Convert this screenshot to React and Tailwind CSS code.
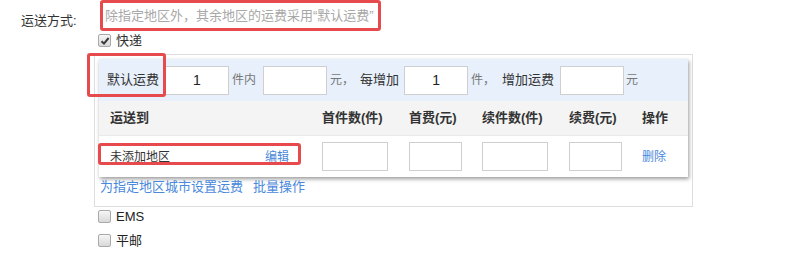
import { Fragment } from 'react';

const FONT = 'font-["Liberation_Sans","Noto_Sans_CJK_SC",sans-serif]';

function Box({ checked }) {
  return (
    <span className="w-[13px] h-[13px] rounded-[2px] border border-[#a9a9a9] bg-gradient-to-b from-[#f6f6f6] to-[#d9d9d9] flex items-center justify-center shrink-0">
      {checked && (
        <svg width="10" height="10" viewBox="0 0 10 10">
          <path d="M1.5 5.2 L4 7.6 L8.6 2" fill="none" stroke="#3a3a3a" strokeWidth="2" />
        </svg>
      )}
    </span>
  );
}

function Field({ value = '', className = '' }) {
  return (
    <div className={`h-[29px] bg-white border border-[#cfcfcf] flex items-center justify-center text-[14px] text-[#222] ${className}`}>
      {value}
    </div>
  );
}

const heads = ['运送到', '首件数(件)', '首费(元)', '续件数(件)', '续费(元)', '操作'];

export default function App() {
  return (
    <div className={`relative w-[791px] h-[265px] bg-white overflow-hidden text-[13px] text-[#333] ${FONT}`}>
      {/* 运送方式 */}
      <div className="flex h-[31px]">
        <div className="w-[100px] pl-[21px] pt-[11px] leading-[20px]">运送方式:</div>
        <div className="w-[281px] h-[31px] border-[3px] border-[#e64a4d] rounded-[3px] pl-[2px] flex items-center text-[13px] text-[#a8a8a8]">
          除指定地区外，其余地区的运费采用“默认运费”
        </div>
      </div>

      <div className="flex items-center gap-[5px] pl-[98px] mt-[3px] h-[13px]">
        <Box checked />
        <span className="leading-[13px]">快递</span>
      </div>

      {/* 快递设置 */}
      <div className="ml-[94px] mt-[7px] w-[599px] h-[153px] border border-[#dedede] pt-[4px] pl-[4px]">
        <div className="w-[589px] h-[118px] bg-white shadow-[1px_2px_4px_rgba(0,0,0,0.4)] flex flex-col">
          <div className="h-[42px] bg-[#e7f0fb] flex items-center pl-[8px] text-[13px]">
            <span className="text-[#333]">默认运费</span>
            <Field value="1" className="w-[64px] ml-[6px]" />
            <span className="ml-[3px] text-[12px] text-[#777]">件内</span>
            <Field className="w-[64px] ml-[7px]" />
            <span className="ml-[3px] text-[12px] text-[#777]">元，</span>
            <span className="ml-[6px] text-[#333]">每增加</span>
            <Field value="1" className="w-[64px] ml-[5px]" />
            <span className="ml-[3px] text-[12px] text-[#777]">件，</span>
            <span className="ml-[7px] text-[#333]">增加运费</span>
            <Field className="w-[64px] ml-[6px]" />
            <span className="ml-[2px] text-[12px] text-[#777]">元</span>
          </div>

          <div className="grid grid-cols-[223px_87px_73px_87px_73px_1fr]">
            {heads.map((h, i) => (
              <div
                key={h}
                className={`h-[35px] bg-[#f4f4f4] border-b border-[#e9e9e9] flex items-center font-bold text-[13px] text-[#333] ${i === 0 ? 'pl-[11px]' : ''}`}
              >
                {h}
              </div>
            ))}

            <div className="h-[41px] flex items-center pl-[11px]">
              <span className="text-[12px] text-[#333]">未添加地区</span>
              <span className="ml-[95px] text-[12px] text-[#4a88db]">编辑</span>
            </div>
            {['w-[66px]', 'w-[53px]', 'w-[66px]', 'w-[53px]'].map((w, i) => (
              <div key={i} className="h-[41px] flex items-center">
                <Field className={w} />
              </div>
            ))}
            <div className="h-[41px] flex items-center text-[12px] text-[#4a88db]">删除</div>
          </div>
        </div>

        <div className="flex items-center gap-[10px] h-[20px] pl-[1px] text-[13px] text-[#4a88db]">
          <span>为指定地区城市设置运费</span>
          <span>批量操作</span>
        </div>
      </div>

      <div className="flex items-center gap-[5px] pl-[98px] mt-[3px] h-[13px]">
        <Box />
        <span className="leading-[13px] text-[#222]">EMS</span>
      </div>
      <div className="flex items-center gap-[5px] pl-[98px] mt-[11px] h-[13px]">
        <Box />
        <span className="leading-[13px] text-[#222]">平邮</span>
      </div>

      {/* annotations */}
      <div className="absolute left-[87px] top-[53px] w-[79px] h-[44px] border-[3px] border-[#e64a4d] rounded-[3px]" />
      <div className="absolute left-[98px] top-[143px] w-[203px] h-[22px] border-[3px] border-[#e64a4d] rounded-[3px]" />
    </div>
  );
}
